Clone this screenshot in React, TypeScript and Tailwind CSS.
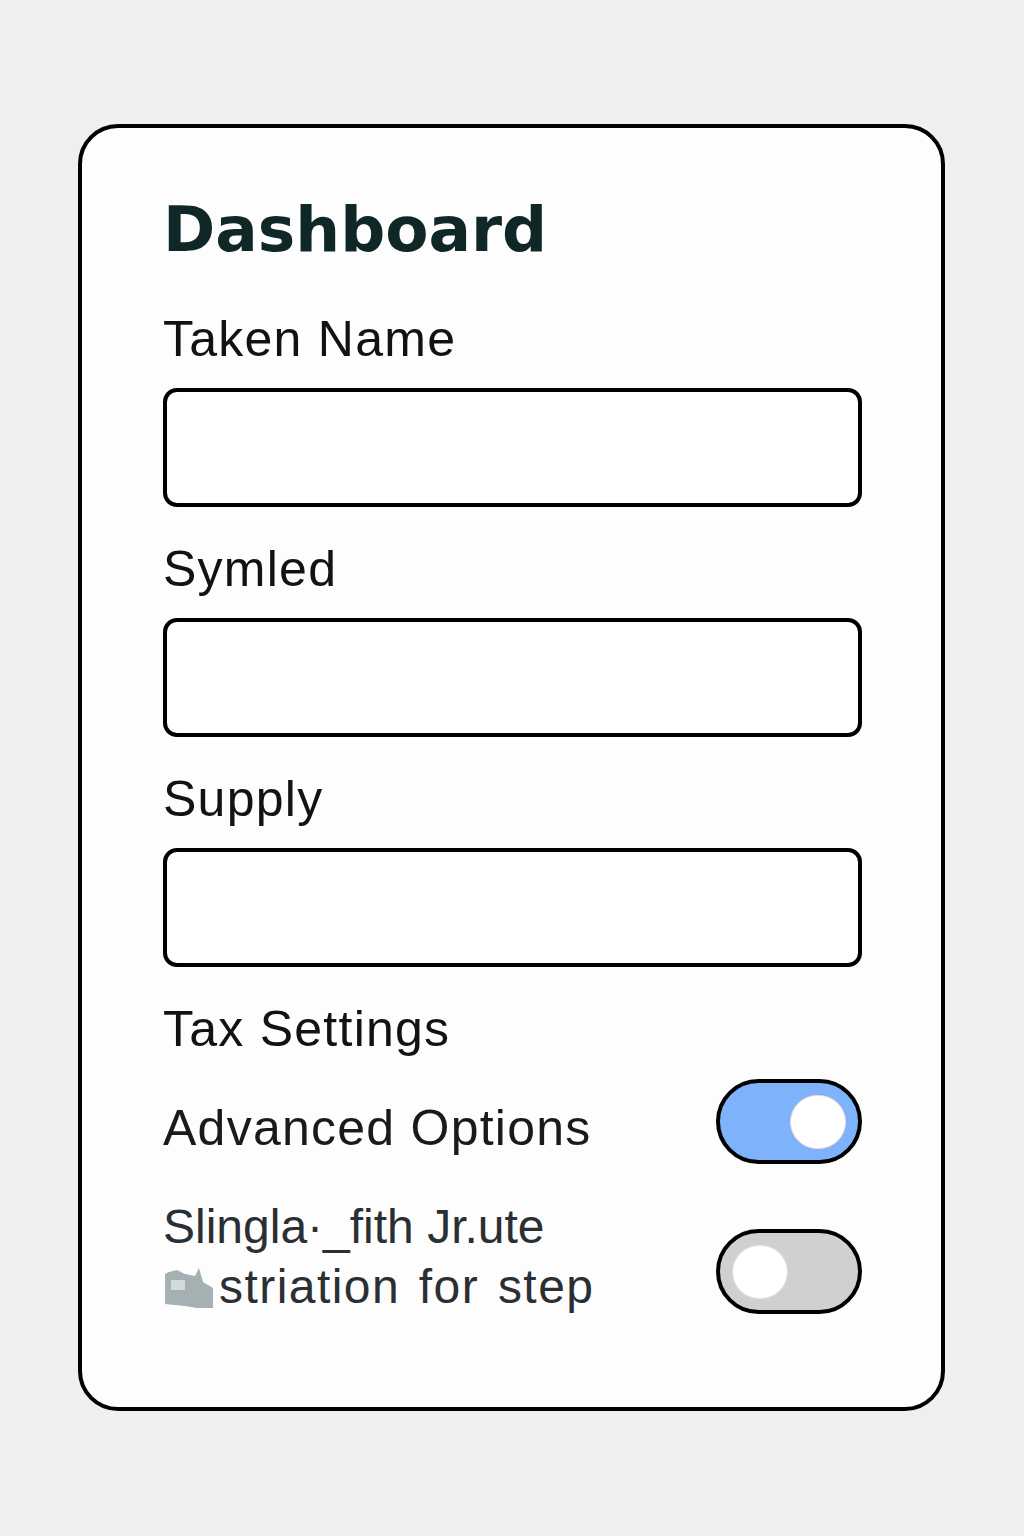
import type { ReactNode } from "react";

function Field({ label, top }: { label: string; top: string }) {
  return (
    <div className={`flex flex-col ${top}`}>
      <label className="text-[50px] leading-none tracking-[0.025em] text-[#121212]">
        {label}
      </label>
      <div className="mt-[24px] h-[119px] rounded-[14px] border-4 border-black bg-white" />
    </div>
  );
}

function Toggle({ on }: { on: boolean }) {
  return (
    <div
      className={`flex h-[85px] w-[146px] shrink-0 items-center rounded-full border-4 border-black px-[12px] ${
        on ? "justify-end bg-[#7eb2fb]" : "justify-start bg-[#cfd0cf]"
      }`}
    >
      <div className="h-[54px] w-[56px] rounded-full border border-[#f3d6dc] bg-white" />
    </div>
  );
}

function Smudge() {
  return (
    <svg width="54" height="46" viewBox="0 0 54 46" className="mr-[2px] shrink-0 opacity-80">
      <path
        d="M2 10 L2 40 L22 42 L34 44 L50 44 L50 24 L40 18 L36 4 L32 12 L22 10 L14 6 L6 8 Z"
        fill="#8e9e9f"
      />
      <rect x="8" y="16" width="14" height="10" fill="#c9d2d2" />
    </svg>
  );
}

function Row({ children, className }: { children: ReactNode; className?: string }) {
  return <div className={`flex justify-between ${className ?? ""}`}>{children}</div>;
}

export default function App() {
  return (
    <div
      className="min-h-[1536px] bg-[#efefef] pl-[78px] pt-[124px]"
      style={{ fontFamily: '"Liberation Sans", Arial, sans-serif' }}
    >
      <div className="flex h-[1287px] w-[867px] flex-col rounded-[40px] border-4 border-black bg-[#fdfdfd] pl-[81px] pr-[79px] pt-[70px]">
        <h1
          className="text-[63px] font-bold leading-none text-[#0f2727]"
          style={{ fontFamily: '"DejaVu Sans", sans-serif' }}
        >
          Dashboard
        </h1>

        <Field label="Taken Name" top="mt-[53px]" />
        <Field label="Symled" top="mt-[37px]" />
        <Field label="Supply" top="mt-[37px]" />

        <p className="mt-[37px] text-[50px] leading-none tracking-[0.025em] text-[#121212]">
          Tax Settings
        </p>

        <Row className="mt-[25px] items-center">
          <span className="pt-[12px] text-[50px] leading-none tracking-[0.025em] text-[#1a1a1a]">
            Advanced Options
          </span>
          <Toggle on />
        </Row>

        <Row className="mt-[33px] items-start">
          <div className="text-[48px] leading-[60px] text-[#2a2f33]">
            <div>Slingla·_fith Jr.ute</div>
            <div className="flex items-center tracking-[0.03em] [word-spacing:4px]">
              <Smudge />
              striation for step
            </div>
          </div>
          <div className="mt-[32px]">
            <Toggle on={false} />
          </div>
        </Row>
      </div>
    </div>
  );
}
